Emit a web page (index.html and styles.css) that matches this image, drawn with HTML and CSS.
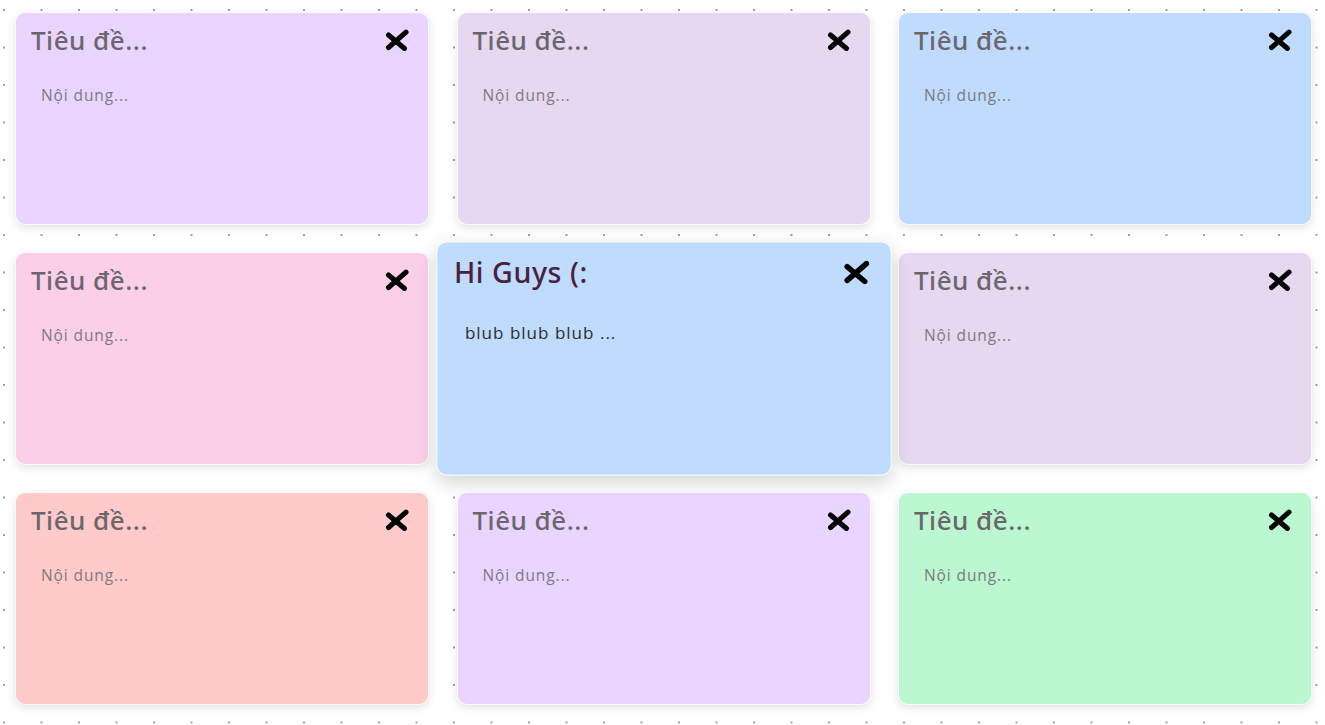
FILE: index.html
```html
<!DOCTYPE html>
<html lang="vi">
<head>
<meta charset="utf-8">
<title>Notes</title>
<link rel="stylesheet" href="styles.css">
</head>
<body>
<main class="board">
  <article class="note note-purple">
    <header class="note-head"><h2 class="note-title">Tiêu đề...</h2><button class="note-close" aria-label="Xóa"><svg viewBox="0 0 24 22" width="24" height="22"><path d="M3.5 6 L19.5 19.5 M21 3.2 L3.5 18.5"/></svg></button></header>
    <p class="note-body">Nội dung...</p>
  </article>
  <article class="note note-lilac">
    <header class="note-head"><h2 class="note-title">Tiêu đề...</h2><button class="note-close" aria-label="Xóa"><svg viewBox="0 0 24 22" width="24" height="22"><path d="M3.5 6 L19.5 19.5 M21 3.2 L3.5 18.5"/></svg></button></header>
    <p class="note-body">Nội dung...</p>
  </article>
  <article class="note note-blue">
    <header class="note-head"><h2 class="note-title">Tiêu đề...</h2><button class="note-close" aria-label="Xóa"><svg viewBox="0 0 24 22" width="24" height="22"><path d="M3.5 6 L19.5 19.5 M21 3.2 L3.5 18.5"/></svg></button></header>
    <p class="note-body">Nội dung...</p>
  </article>
  <article class="note note-pink">
    <header class="note-head"><h2 class="note-title">Tiêu đề...</h2><button class="note-close" aria-label="Xóa"><svg viewBox="0 0 24 22" width="24" height="22"><path d="M3.5 6 L19.5 19.5 M21 3.2 L3.5 18.5"/></svg></button></header>
    <p class="note-body">Nội dung...</p>
  </article>
  <article class="note note-blue note-active">
    <header class="note-head"><h2 class="note-title">Hi Guys (:</h2><button class="note-close" aria-label="Xóa"><svg viewBox="0 0 24 22" width="24" height="22"><path d="M3.5 6 L19.5 19.5 M21 3.2 L3.5 18.5"/></svg></button></header>
    <p class="note-body">blub blub blub ...</p>
  </article>
  <article class="note note-lilac">
    <header class="note-head"><h2 class="note-title">Tiêu đề...</h2><button class="note-close" aria-label="Xóa"><svg viewBox="0 0 24 22" width="24" height="22"><path d="M3.5 6 L19.5 19.5 M21 3.2 L3.5 18.5"/></svg></button></header>
    <p class="note-body">Nội dung...</p>
  </article>
  <article class="note note-red">
    <header class="note-head"><h2 class="note-title">Tiêu đề...</h2><button class="note-close" aria-label="Xóa"><svg viewBox="0 0 24 22" width="24" height="22"><path d="M3.5 6 L19.5 19.5 M21 3.2 L3.5 18.5"/></svg></button></header>
    <p class="note-body">Nội dung...</p>
  </article>
  <article class="note note-purple">
    <header class="note-head"><h2 class="note-title">Tiêu đề...</h2><button class="note-close" aria-label="Xóa"><svg viewBox="0 0 24 22" width="24" height="22"><path d="M3.5 6 L19.5 19.5 M21 3.2 L3.5 18.5"/></svg></button></header>
    <p class="note-body">Nội dung...</p>
  </article>
  <article class="note note-green">
    <header class="note-head"><h2 class="note-title">Tiêu đề...</h2><button class="note-close" aria-label="Xóa"><svg viewBox="0 0 24 22" width="24" height="22"><path d="M3.5 6 L19.5 19.5 M21 3.2 L3.5 18.5"/></svg></button></header>
    <p class="note-body">Nội dung...</p>
  </article>
</main>
</body>
</html>
```

FILE: styles.css
```css
html, body {
  margin: 0;
  padding: 0;
}

body {
  min-height: 725px;
  background-color: #ffffff;
  background-image: radial-gradient(circle, #ad9aa8 0.9px, rgba(255,255,255,0) 1.5px);
  background-size: 37.5px 37.5px;
  background-position: -14.75px -8.75px;
  font-family: "Open Sans", "Liberation Sans", sans-serif;
  overflow: hidden;
}

.board {
  display: grid;
  grid-template-columns: repeat(3, 414px);
  grid-auto-rows: 213px;
  column-gap: 27.5px;
  row-gap: 27px;
  padding: 12px 0 12px 15px;
}

.note {
  box-sizing: border-box;
  border-radius: 10px;
  border: 1px solid rgba(255, 255, 255, 0.85);
  box-shadow: 0 3px 9px rgba(0, 0, 0, 0.11);
  display: flex;
  flex-direction: column;
}

.note-purple { background: #e9d5ff; }
.note-lilac { background: #e5d8f0; }
.note-blue { background: #bfdbfe; }
.note-pink { background: #fbcfe8; }
.note-red { background: #fecaca; }
.note-green { background: #bbf7d0; }

.note-active {
  transform: scale(1.1);
  box-shadow: 0 6px 16px rgba(0, 0, 0, 0.16);
  position: relative;
  z-index: 1;
}

.note-head {
  display: flex;
  align-items: center;
  justify-content: space-between;
  padding: 12px 19px 0 15px;
}

.note-title {
  margin: 0;
  font-family: "Noto Sans", "Open Sans", sans-serif;
  font-size: 26px;
  font-weight: 500;
  line-height: 30px;
  color: #6b666c;
  letter-spacing: 0.5px;
}

.note-active .note-title {
  color: #4b1f3e;
}

.note-close {
  border: 0;
  background: none;
  padding: 0;
  width: 24px;
  height: 22px;
  display: block;
  cursor: pointer;
}

.note-close svg {
  display: block;
  fill: none;
  stroke: #000;
  stroke-width: 5;
  stroke-linecap: round;
}

.note-body {
  margin: 30px 0 0 25px;
  font-size: 15.5px;
  line-height: 20px;
  letter-spacing: 0.9px;
  color: #7d7b80;
}

.note-active .note-body {
  color: #2e2e2e;
}
```
